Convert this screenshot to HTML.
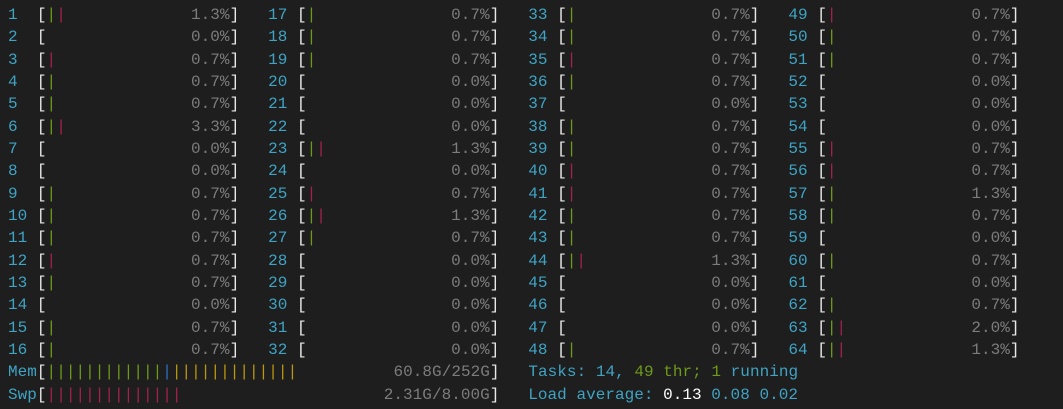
<!DOCTYPE html>
<html><head><style>
html,body{margin:0;padding:0;background:#1e1e1e;width:1063px;height:409px;overflow:hidden}
pre{margin:0;padding:4px 0 0 8px;font-family:"Liberation Mono",monospace;font-size:16px;line-height:22.33px;color:#d0d0d0;letter-spacing:0.03px}
.c{color:#3fa3c4}.w{color:#e8e8e8}.p{color:#7c7c7c}.g{color:#6d9a1a}.r{color:#a3214e}.b{color:#2f6fc0}.y{color:#b8980e}.W{color:#ffffff}
</style></head><body><pre id="o"></pre>
<script>
var d=[
["1","gr","1.3"],["2","","0.0"],["3","r","0.7"],["4","g","0.7"],["5","g","0.7"],["6","gr","3.3"],["7","","0.0"],["8","","0.0"],["9","g","0.7"],["10","g","0.7"],["11","g","0.7"],["12","r","0.7"],["13","g","0.7"],["14","","0.0"],["15","g","0.7"],["16","g","0.7"],
["17","g","0.7"],["18","g","0.7"],["19","g","0.7"],["20","","0.0"],["21","","0.0"],["22","","0.0"],["23","gr","1.3"],["24","","0.0"],["25","r","0.7"],["26","gr","1.3"],["27","g","0.7"],["28","","0.0"],["29","","0.0"],["30","","0.0"],["31","","0.0"],["32","","0.0"],
["33","g","0.7"],["34","g","0.7"],["35","r","0.7"],["36","g","0.7"],["37","","0.0"],["38","g","0.7"],["39","g","0.7"],["40","r","0.7"],["41","r","0.7"],["42","g","0.7"],["43","g","0.7"],["44","gr","1.3"],["45","","0.0"],["46","","0.0"],["47","","0.0"],["48","g","0.7"],
["49","r","0.7"],["50","g","0.7"],["51","g","0.7"],["52","","0.0"],["53","","0.0"],["54","","0.0"],["55","r","0.7"],["56","r","0.7"],["57","g","1.3"],["58","g","0.7"],["59","","0.0"],["60","g","0.7"],["61","","0.0"],["62","g","0.7"],["63","gr","2.0"],["64","gr","1.3"]];
function cell(e){var n=e[0];while(n.length<3)n+=" ";var s='<span class="c">'+n+'</span><span class="w">[</span>';var bars=e[1];for(var i=0;i<bars.length;i++)s+='<span class="'+bars[i]+'">|</span>';var t=e[2]+"%";var sp=19-bars.length-t.length;s+=" ".repeat(sp)+'<span class="p">'+t+'</span><span class="w">]</span>   ';return s;}
var out="";
for(var r=0;r<16;r++){for(var c=0;c<4;c++)out+=cell(d[c*16+r]);out+="\n";}
var mem='<span class="c">Mem</span><span class="w">[</span>';var mb="";
for(var i=0;i<26;i++){var k=i<12?"g":(i==12?"b":"y");mb+='<span class="'+k+'">|</span>';}
mem+=mb+" ".repeat(46-26-10)+'<span class="p">60.8G/252G</span><span class="w">]</span>   ';
mem+='<span class="c">Tasks: 14, </span><span class="g">49 thr; 1</span><span class="c"> running</span>\n';
var sw='<span class="c">Swp</span><span class="w">[</span>';
for(var i=0;i<14;i++)sw+='<span class="r">|</span>';
sw+=" ".repeat(46-14-11)+'<span class="p">2.31G/8.00G</span><span class="w">]</span>   ';
sw+='<span class="c">Load average: </span><span class="W">0.13 </span><span class="c">0.08 0.02</span>';
out+=mem+sw;
document.getElementById("o").innerHTML=out;
</script></body></html>
